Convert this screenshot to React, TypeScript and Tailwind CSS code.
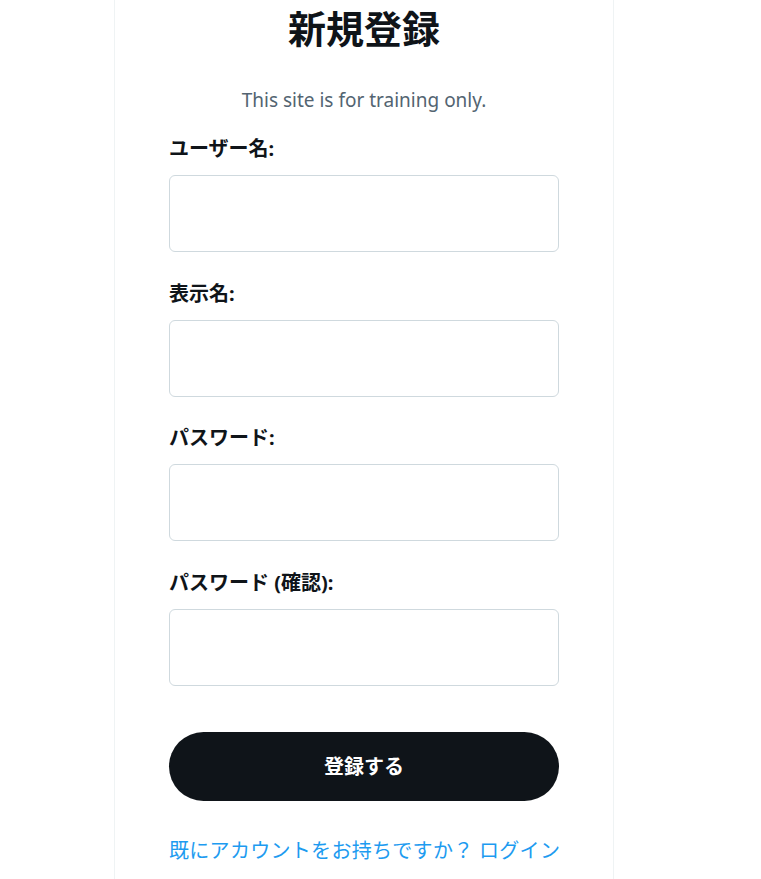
import React from "react";

const fields = ["ユーザー名:", "表示名:", "パスワード:", "パスワード (確認):"];

export default function App() {
  return (
    <div className="min-h-screen bg-white text-[#0f1419]">
      <div className="ml-[114px] w-[500px] min-h-[879px] border-x border-[#eff3f4] font-['Noto_Sans','Noto_Sans_CJK_JP',sans-serif]">
        <div className="mx-auto w-[390px]">
          <h1 className="pt-[5px] text-center text-[38px] leading-[46px] font-bold">新規登録</h1>
          <p className="mt-[35px] text-center text-[19px] leading-[28px] text-[#536471]">
            This site is for training only.
          </p>
          <form className="mt-[21px]" onSubmit={(e) => e.preventDefault()}>
            {fields.map((f) => (
              <div key={f} className="mb-[27.5px]">
                <label className="block text-[20px] leading-[28px] font-bold">{f}</label>
                <input
                  type="text"
                  className="mt-[12px] block h-[77px] w-full rounded-md border border-[#cfd9de] bg-white px-3 outline-none"
                />
              </div>
            ))}
            <button
              type="submit"
              className="mt-[46.5px] block h-[69px] w-full rounded-full bg-[#0f1419] text-[20px] font-bold text-white"
            >
              登録する
            </button>
          </form>
          <p className="mt-[36px] text-center text-[20px] leading-[28px] tracking-[0.3px] text-[#1d9bf0] whitespace-nowrap">
            既にアカウントをお持ちですか？ ログイン
          </p>
        </div>
      </div>
    </div>
  );
}
